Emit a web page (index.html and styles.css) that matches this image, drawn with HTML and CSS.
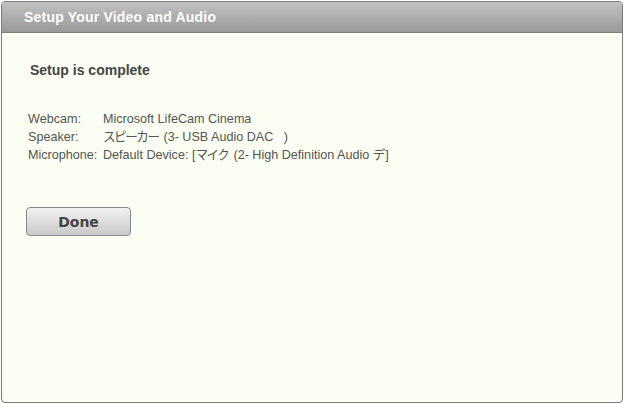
FILE: index.html
```html
<!DOCTYPE html>
<html>
<head>
<meta charset="utf-8">
<link rel="stylesheet" href="styles.css">
</head>
<body>
<div class="panel">
  <div class="header">Setup Your Video and Audio</div>
  <div class="content">
    <h2 class="title">Setup is complete</h2>
    <div class="devices">
      <div class="label">Webcam:</div><div class="value">Microsoft LifeCam Cinema</div>
      <div class="label">Speaker:</div><div class="value"><span class="jp">スピーカー</span> (3- USB Audio DAC&nbsp;&nbsp;&nbsp;)</div>
      <div class="label">Microphone:</div><div class="value">Default Device: [<span class="jp">マイク</span> (2- High Definition Audio <span class="jp">デ</span>]</div>
    </div>
    <button class="done">Done</button>
  </div>
</div>
</body>
</html>
```

FILE: styles.css
```css
html, body { margin: 0; padding: 0; background: #ffffff; }
body { padding: 1px; font-family: "Liberation Sans", Arial, "Noto Sans CJK JP", sans-serif; }
.panel {
  width: 622px;
  height: 402px;
  box-sizing: border-box;
  border: 1px solid #7a7a7a;
  border-radius: 4px;
  background: #fafef3;
  overflow: hidden;
  display: flex;
  flex-direction: column;
}
.header {
  height: 31px;
  box-sizing: border-box;
  border-bottom: 1px solid #808080;
  background: linear-gradient(#c2c2c2, #999999);
  color: #ffffff;
  font-weight: bold;
  font-size: 14px;
  letter-spacing: 0.2px;
  line-height: 30px;
  padding-left: 22px;
}
.content {
  padding: 0 0 0 24px;
  color: #555555;
}
.title {
  margin: 29px 0 0 4px;
  font-size: 14px;
  font-weight: bold;
  color: #454545;
  line-height: 16px;
}
.devices {
  margin-top: 32px;
  margin-left: 2px;
  display: grid;
  grid-template-columns: 75px auto;
  justify-content: start;
  font-size: 12.6px;
  line-height: 18px;
}
.jp { letter-spacing: -1.5px; padding-right: 1.5px; }
.done {
  margin: 43px 0 0 0;
  width: 105px;
  height: 29px;
  border: 1px solid #8a8a8a;
  border-radius: 4px;
  background: linear-gradient(#f2f2f2, #c9c9c9);
  font-family: "DejaVu Sans", Verdana, sans-serif;
  font-weight: bold;
  font-size: 14px;
  color: #444444;
  padding: 0;
}
```
